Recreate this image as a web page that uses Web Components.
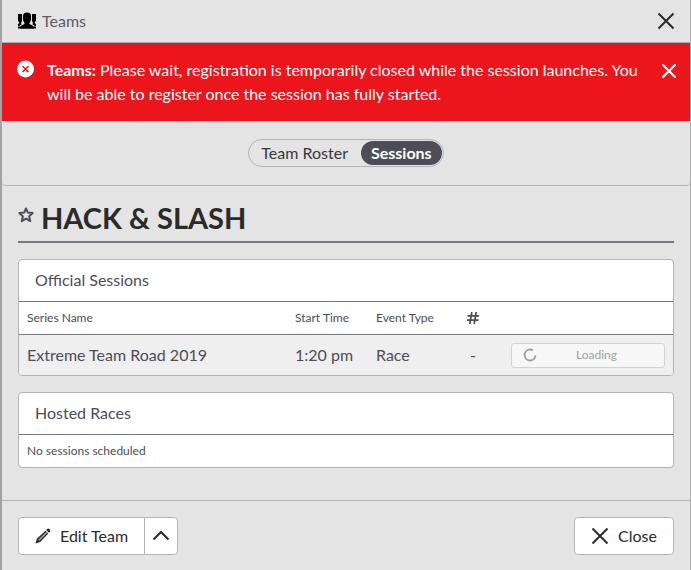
<!DOCTYPE html>
<html lang="en">
<head>
<meta charset="utf-8">
<title>Teams</title>
<style>
    body{
        margin: 0;
        background: #e4e4e4;
        color: #4d4d57;
        font: 16px/24px Lato, "Liberation Sans", sans-serif;
    }
</style>
</head>
<body>
<team-window></team-window>

<script>
const CROSS = '<path d="M1.500 1.500 16.500 16.500M16.500 1.500 1.500 16.500"/>';

class ModalHeader extends HTMLElement{
    connectedCallback(){
        this.attachShadow({mode: 'open'}).innerHTML = `
            <style>
                :host{
                    display: flex;
                    align-items: center;
                    gap: 6px;
                    height: 42px;
                    padding: 0 15px 0 16px;
                    border-bottom: 1px solid #adadb0;
                }
                h1{
                    flex: 1;
                    margin: 0;
                    font-size: 16px;
                    font-weight: 400;
                    line-height: 24px;
                    color: #5c5c62;
                }
                button{
                    display: flex;
                    padding: 0;
                    border: 0;
                    background: none;
                    color: #2b2b2b;
                }
            </style>
            <svg width="18" height="18" viewBox="0 0 18 18" aria-hidden="true">
                <path d="M0 2H4V9L3 11 3.500 12.500 1 14H0V12L1.500 11 0 8.500ZM18 2H14V9L15 11 14.500 12.500 17 14H18V12L16.500 11 18 8.500ZM0 14.500H18V16.500H0Z"/>
                <path d="M9 .5Q13 .5 13 4V7Q13 9.500 11.500 11V12L14.500 13.500Q16 14.500 16 16.500H2Q2 14.500 3.500 13.500L6.500 12V11Q5 9.500 5 7V4Q5 .5 9 .5Z"/>
            </svg>
            <h1><slot></slot></h1>
            <button type="button" aria-label="Close window">
                <svg width="18" height="18" viewBox="0 0 18 18" fill="none" stroke="currentColor" stroke-width="2">${CROSS}</svg>
            </button>
        `;
    }
}

class AlertBanner extends HTMLElement{
    connectedCallback(){
        this.attachShadow({mode: 'open'}).innerHTML = `
            <style>
                :host{
                    display: flex;
                    gap: 12px;
                    padding: 15px 14px 15px 15px;
                    background: #ec151b;
                    color: #fff;
                }
                p{
                    flex: 1;
                    margin: 0;
                }
                svg{
                    display: block;
                }
                .mark{
                    margin-top: 2px;
                }
                button{
                    align-self: flex-start;
                    margin-top: 6px;
                    padding: 0;
                    border: 0;
                    background: none;
                    color: inherit;
                }
            </style>
            <svg class="mark" width="18" height="18" viewBox="0 0 18 18" aria-hidden="true">
                <circle cx="8.500" cy="9" r="8.500" fill="#fff"/>
                <path d="M5.500 6 11.500 12M11.500 6 5.500 12" stroke="#ec151b" stroke-width="1.500"/>
            </svg>
            <p role="alert"><slot></slot></p>
            <button type="button" aria-label="Dismiss">
                <svg width="14" height="14" viewBox="1 1 16 16" fill="none" stroke="currentColor" stroke-width="2.500">${CROSS}</svg>
            </button>
        `;
    }
}

class TabSwitch extends HTMLElement{
    connectedCallback(){
        this.attachShadow({mode: 'open'}).innerHTML = `
            <style>
                :host{
                    display: flex;
                    justify-content: center;
                    padding: 18px 0;
                    border-bottom: 1px solid #b4b4b6;
                    border-radius: 0 0 4px 4px;
                }
                nav{
                    display: flex;
                    gap: 2px;
                    padding: 1px;
                    border: 1px solid #b4b4b6;
                    border-radius: 14px;
                }
                button{
                    height: 24px;
                    padding: 0 11px;
                    border: 0;
                    border-radius: 12px;
                    background: none;
                    color: #38383c;
                    font: inherit;
                }
                button[aria-current]{
                    padding: 0 10px;
                    background: #4d4d57;
                    color: #fff;
                    font-weight: 700;
                }
            </style>
            <nav>
                <button type="button">Team Roster</button>
                <button type="button" aria-current="page">Sessions</button>
            </nav>
        `;
    }
}

class TeamTitle extends HTMLElement{
    connectedCallback(){
        this.attachShadow({mode: 'open'}).innerHTML = `
            <style>
                :host{
                    display: flex;
                    align-items: center;
                    gap: 7px;
                    padding-bottom: 6px;
                    border-bottom: 2px solid #77777f;
                }
                h2{
                    margin: 0;
                    color: #2b2b2b;
                    font-size: 29px;
                    font-weight: 700;
                    line-height: 34px;
                }
                button{
                    display: flex;
                    padding: 0 0 6px;
                    border: 0;
                    background: none;
                    color: #4d4d57;
                }
            </style>
            <button type="button" aria-label="Add to favorites">
                <svg width="16" height="16" viewBox="0 0 16 16" fill="none" stroke="currentColor" stroke-width="2" stroke-linejoin="round">
                    <path d="M8 1.500 9.900 5.600 14.700 6.100 11.200 9.300 12.200 14.200 8 11.700 3.800 14.200 4.800 9.300 1.300 6.100 6.100 5.600Z"/>
                </svg>
            </button>
            <h2><slot></slot></h2>
        `;
    }
}

class PanelCard extends HTMLElement{
    connectedCallback(){
        this.attachShadow({mode: 'open'}).innerHTML = `
            <style>
                :host{
                    display: block;
                    overflow: hidden;
                    border: 1px solid #b4b4b6;
                    border-radius: 4px;
                    background: #fff;
                }
                h3{
                    margin: 0;
                    padding: 8px 16px 9px;
                    border-bottom: 1px solid #77777f;
                    font-size: 16px;
                    font-weight: 400;
                }
            </style>
            <h3><slot name="heading"></slot></h3>
            <slot></slot>
        `;
    }
}

class SessionTable extends HTMLElement{
    connectedCallback(){
        this.attachShadow({mode: 'open'}).innerHTML = `
            <style>
                :host{
                    display: block;
                }
                table{
                    width: 100%;
                    border-spacing: 0;
                    table-layout: fixed;
                }
                th, td{
                    padding: 0 8px;
                    text-align: left;
                    white-space: nowrap;
                }
                th{
                    height: 32px;
                    border-bottom: 1px solid #77777f;
                    font-size: 12px;
                    font-weight: 400;
                    line-height: 16px;
                }
                td{
                    height: 40px;
                    background: #efefef;
                }
                .start{ width: 65px; }
                .type{ width: 75px; }
                .action{ width: 154px; }
                .count{
                    width: 12px;
                    padding-right: 24px;
                    text-align: center;
                }
                th svg{
                    display: block;
                }
                button{
                    display: grid;
                    grid-template-columns: 14px 1fr;
                    align-items: center;
                    width: 100%;
                    height: 25px;
                    padding: 0 8px 0 11px;
                    border: 1px solid #d2d2d3;
                    border-radius: 3px;
                    background: #f7f7f7;
                    color: #a0a0a3;
                    font: 12px/16px Lato, "Liberation Sans", sans-serif;
                }
            </style>
            <table>
                <thead>
                    <tr>
                        <th>Series Name</th>
                        <th class="start">Start Time</th>
                        <th class="type">Event Type</th>
                        <th class="count" aria-label="Count">
                            <svg width="12" height="12" viewBox="0 0 12 12" fill="none" stroke="currentColor" stroke-width="1.700">
                                <path d="M4.800 0 2.800 12M9.200 0 7.200 12M.5 3.800H12M0 8.200H11.500"/>
                            </svg>
                        </th>
                        <th class="action"></th>
                    </tr>
                </thead>
                <tbody>
                    <tr>
                        <td>Extreme Team Road 2019</td>
                        <td>1:20 pm</td>
                        <td>Race</td>
                        <td class="count">-</td>
                        <td>
                            <button type="button" disabled>
                                <svg width="14" height="14" viewBox="0 0 14 14" fill="none" stroke="currentColor" stroke-width="2">
                                    <path d="M12.400 7.500A5.400 5.400 0 1 1 7 1.600Q8.700 1.600 9.800 2.300"/>
                                </svg>
                                <span>Loading</span>
                            </button>
                        </td>
                    </tr>
                </tbody>
            </table>
        `;
    }
}

class ModalFooter extends HTMLElement{
    connectedCallback(){
        this.attachShadow({mode: 'open'}).innerHTML = `
            <style>
                :host{
                    display: flex;
                    justify-content: space-between;
                    padding: 16px 16px 15px;
                    border-top: 1px solid #b4b4b6;
                }
                .group{
                    display: flex;
                }
                button{
                    display: flex;
                    align-items: center;
                    gap: 9px;
                    height: 38px;
                    padding: 0 16px;
                    border: 1px solid #b4b4b6;
                    border-radius: 4px;
                    background: #fff;
                    color: #2b2b2b;
                    font: inherit;
                }
                .group button:first-child{
                    border-radius: 4px 0 0 4px;
                }
                .group button:last-child{
                    margin-left: -1px;
                    padding: 0 7px;
                    border-radius: 0 4px 4px 0;
                }
            </style>
            <div class="group">
                <button type="button">
                    <svg width="16" height="16" viewBox="0 0 16 16" aria-hidden="true">
                        <path fill="#2b2b2b" d="M.5 15.500 1.800 10.800 10.500 2.700 13.300 5.500 5.200 14ZM11.200 2 12.500.8Q13.300.2 14.200 1L15 1.800Q15.800 2.700 15.200 3.500L14 4.800Z"/>
                        <path d="M3.800 12.200 11.700 4.500" stroke="#aaa" stroke-width="1.400"/>
                    </svg>
                    Edit Team
                </button>
                <button type="button" aria-label="More actions">
                    <svg width="18" height="18" viewBox="0 0 18 18" fill="none" stroke="currentColor" stroke-width="2">
                        <path d="M1.500 12.500 9 5 16.500 12.500"/>
                    </svg>
                </button>
            </div>
            <button type="button">
                <svg width="18" height="18" viewBox="0 0 18 18" fill="none" stroke="currentColor" stroke-width="2" aria-hidden="true">${CROSS}</svg>
                Close
            </button>
        `;
    }
}

class TeamWindow extends HTMLElement{
    connectedCallback(){
        this.attachShadow({mode: 'open'}).innerHTML = `
            <style>
                :host{
                    display: flex;
                    flex-direction: column;
                    box-sizing: border-box;
                    min-height: 100vh;
                    border-left: 2px solid #a3a3a3;
                    border-right: 1px solid #adadad;
                }
                main{
                    display: flex;
                    flex: 1;
                    flex-direction: column;
                    gap: 16px;
                    padding: 15px 16px 32px;
                }
                p{
                    margin: 0;
                    padding: 8px;
                    font-size: 12px;
                    line-height: 16px;
                }
            </style>
            <modal-header>Teams</modal-header>
            <alert-banner><b>Teams:</b> Please wait, registration is temporarily closed while the session launches. You will be able to register once the session has fully started.</alert-banner>
            <tab-switch></tab-switch>
            <main>
                <team-title>HACK &amp; SLASH</team-title>
                <panel-card>
                    <span slot="heading">Official Sessions</span>
                    <session-table></session-table>
                </panel-card>
                <panel-card>
                    <span slot="heading">Hosted Races</span>
                    <p>No sessions scheduled</p>
                </panel-card>
            </main>
            <modal-footer></modal-footer>
        `;
    }
}

customElements.define("modal-header",ModalHeader);
customElements.define("alert-banner",AlertBanner);
customElements.define("tab-switch",TabSwitch);
customElements.define("team-title",TeamTitle);
customElements.define("panel-card",PanelCard);
customElements.define("session-table",SessionTable);
customElements.define("modal-footer",ModalFooter);
customElements.define("team-window",TeamWindow);
</script>
</body>
</html>
